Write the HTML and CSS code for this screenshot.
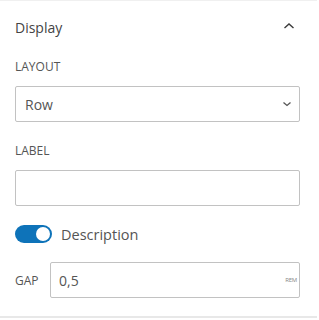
FILE: index.html
```html
<!DOCTYPE html>
<html>
<head>
<meta charset="utf-8">
<link rel="stylesheet" href="styles.css">
</head>
<body>
<div class="panel">
  <div class="header">
    <span class="title">Display</span>
    <svg class="chev-up" width="12" height="8" viewBox="0 0 12 8"><path d="M1.5 6 L6 2 L10.5 6" fill="none" stroke="#3a3a3a" stroke-width="1.4"/></svg>
  </div>
  <div class="field">
    <div class="label">LAYOUT</div>
    <div class="box select">
      <span class="value">Row</span>
      <svg width="10" height="6" viewBox="0 0 10 6"><path d="M1.5 1.5 L5 4.5 L8.5 1.5" fill="none" stroke="#555" stroke-width="1.3"/></svg>
    </div>
  </div>
  <div class="field">
    <div class="label">LABEL</div>
    <div class="box"></div>
  </div>
  <div class="toggle-row">
    <span class="toggle"><span class="knob"></span></span>
    <span class="toggle-text">Description</span>
  </div>
  <div class="gap-row">
    <span class="gap-label">GAP</span>
    <div class="box gap-box">
      <span class="value">0,5</span>
      <span class="unit">REM</span>
    </div>
  </div>
</div>
</body>
</html>
```
FILE: styles.css
```css
html, body {
  margin: 0;
  padding: 0;
  background: #fff;
}
body {
  font-family: "Open Sans", "Noto Sans", sans-serif;
  color: #444;
}
.panel {
  width: 317px;
  box-sizing: border-box;
  border-top: 1px solid #f0f0f0;
  border-bottom: 2px solid #e8e8e8;
  padding: 0 17px 18px 15px;
}
.header {
  height: 53px;
  display: flex;
  align-items: center;
  justify-content: space-between;
}
.title {
  font-size: 14px;
  color: #444;
}
.chev-up {
  margin-right: 5px;
  margin-top: -3px;
}
.field {
  display: flex;
  flex-direction: column;
}
.label {
  font-size: 12px;
  color: #555;
  height: 32px;
  line-height: 26px;
}
.box {
  height: 36px;
  box-sizing: border-box;
  border: 1px solid #c2c2c2;
  border-radius: 2px;
  display: flex;
  align-items: center;
}
.field + .field .label {
  margin-top: 16px;
}
.select {
  justify-content: space-between;
  padding: 0 7px 0 9px;
}
.value {
  font-size: 14px;
  color: #555;
}
.toggle-row {
  display: flex;
  align-items: center;
  margin-top: 19px;
  height: 18px;
}
.toggle {
  width: 37px;
  height: 18px;
  border-radius: 9px;
  background: #0e73b9;
  position: relative;
  display: inline-block;
}
.knob {
  position: absolute;
  right: 2px;
  top: 2px;
  width: 14px;
  height: 14px;
  border-radius: 50%;
  background: #fff;
}
.toggle-text {
  margin-left: 9px;
  font-size: 14.5px;
  color: #555;
}
.gap-row {
  display: flex;
  align-items: center;
  margin-top: 19px;
}
.gap-label {
  font-size: 12px;
  color: #555;
  width: 35px;
}
.gap-box {
  flex: 1;
  justify-content: space-between;
  padding: 0 2px 0 8px;
}
.unit {
  font-size: 6px;
  color: #888;
  letter-spacing: -0.2px;
}
```
